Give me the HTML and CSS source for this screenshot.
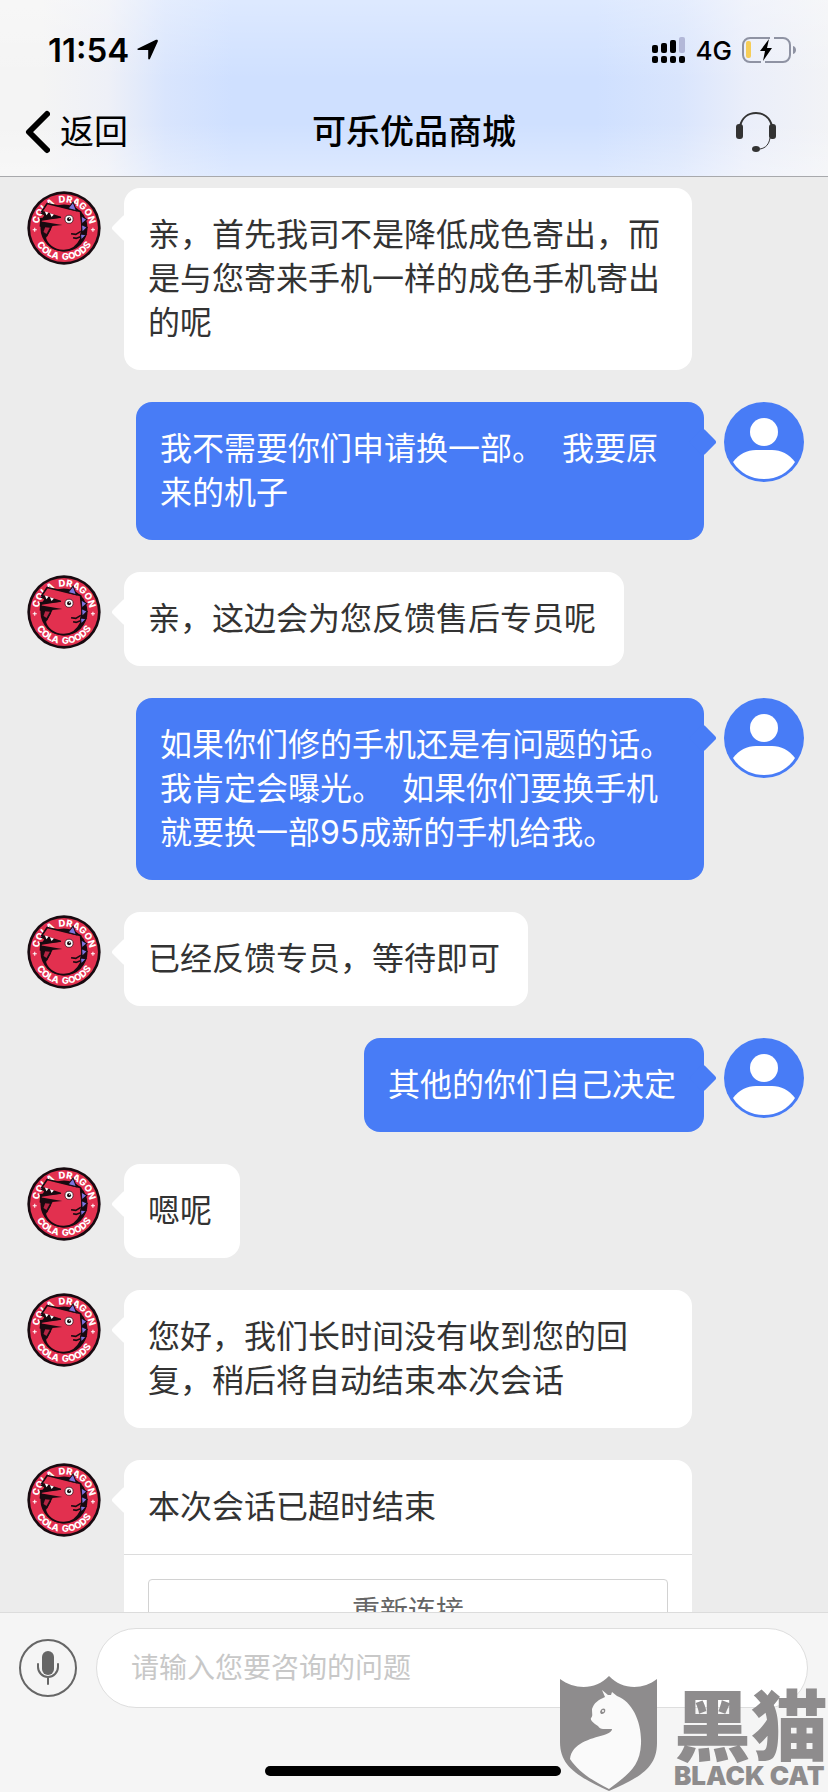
FILE: index.html
```html
<!DOCTYPE html>
<html lang="zh-CN">
<head>
  <meta charset="UTF-8" />
  <meta name="viewport" content="width=device-width, initial-scale=1.0"/>
  <title>可乐优品商城</title>
  <link rel="stylesheet" href="styles.css">
</head>
<body>
  <!-- shared avatars -->
  <svg class="sprite" aria-hidden="true">
    <symbol id="dragon" viewBox="0 0 220 220">
      <circle cx="110" cy="110" r="109" fill="#180a10"/>
      <circle cx="110" cy="110" r="101" fill="#e2304f"/>
      <circle cx="110" cy="110" r="70" fill="#180a10"/>
      <path id="arc-top" d="M34 124V110a76 76 0 0 1 152 0v14" fill="none"/>
      <path id="arc-bottom" d="M15 110a95 95 0 0 0 190 0" fill="none"/>
      <text class="logo-text"><textPath href="#arc-top" startOffset="50%">COLA &nbsp;DRAGON</textPath></text>
      <text class="logo-text"><textPath href="#arc-bottom" startOffset="50%">COLA &nbsp;GOODS</textPath></text>
      <path d="M17 115h12M23 109v12M190 115h12M196 109v12" stroke="#fff" stroke-width="3"/>
      <path d="M60 37l57 14 42 10 5 45-4 36c-11 23-31 36-53 35-27-1-48-17-53-38l15-26-29-9 2-21 57-5-55-17z" fill="#e2304f" stroke="#180a10" stroke-width="5" stroke-linejoin="round"/>
      <path d="M45 61l50 19-55 9-3-9 31-2-28-10z" fill="#180a10"/>
      <path d="M53 61l11 3-6 8zM68 66l12 4-7 7z" fill="#fff"/>
      <path d="M39 90l66 11-29 3-16 31-15-9 12-17-17-5z" fill="#180a10"/>
      <path d="M54 108l14 1-10 19-9-6z" fill="#b52543"/>
      <path d="M131 127l14 2 15-9M137 139l9 2 13-5" fill="none" stroke="#180a10" stroke-width="5"/>
      <g fill="#7b74dd" stroke="#180a10" stroke-width="3">
        <path d="M122 52l15-19 10 26zM161 74l17 11-15 13zM162 100l17 8-15 15zM159 128l17 2-15 16z"/>
      </g>
      <circle cx="125" cy="84" r="12" fill="#fff" stroke="#180a10" stroke-width="2"/>
      <circle cx="125" cy="84" r="6" fill="#180a10"/>
      <circle cx="127" cy="82" r="2" fill="#fff"/>
    </symbol>
    <symbol id="user" viewBox="0 0 80 80">
      <circle cx="40" cy="40" r="40" fill="#487cf6"/>
      <circle cx="40" cy="30" r="14" fill="#fff"/>
      <path d="M9 60c6-8 14-12 23-12h16c9 0 17 4 23 12-7 11-18 17-31 17S16 71 9 60z" fill="#fff"/>
    </symbol>
  </svg>

  <div class="app">
    <header class="header">
      <div class="status-bar">
        <div class="status-left">
          <span class="time">11:54</span>
          <svg width="22" height="22" viewBox="0 0 22 22"><path d="M1 9.500L19 .8c1.300-.5 2.200.4 1.800 1.600L13 19.800c-.5 1.200-1.700 1-1.800-.2V11H2C.4 10.900-.3 10.100 1 9.500z"/></svg>
        </div>
        <div class="status-right">
          <svg width="34" height="28" viewBox="0 0 34 28">
            <rect x="0" y="9" width="6" height="8" rx="2"/>
            <rect x="9" y="7" width="6" height="10" rx="2"/>
            <rect x="18" y="4" width="6" height="13" rx="2"/>
            <rect x="27" y="1" width="6" height="16" rx="2" fill="#b3b8d8"/>
            <rect x="0" y="20" width="6" height="7" rx="2"/>
            <rect x="9" y="20" width="6" height="7" rx="2"/>
            <rect x="18" y="20" width="6" height="7" rx="2"/>
            <rect x="27" y="20" width="6" height="7" rx="2"/>
          </svg>
          <span class="network">4G</span>
          <svg width="54" height="26" viewBox="0 0 54 26">
            <path d="M28 1H8a7 7 0 0 0-7 7v10a7 7 0 0 0 7 7h11M32 1h9a7 7 0 0 1 7 7v10a7 7 0 0 1-7 7H23" fill="none" stroke="#8f93a3" stroke-width="2"/>
            <rect x="4" y="4" width="5" height="17" rx="2" fill="#f6cd58"/>
            <path d="M27 2L18 14h5l-2 10 9-13h-5z"/>
            <path d="M51 9c4 1 4 7 0 8z" fill="#8f93a3"/>
          </svg>
        </div>
      </div>
      <nav class="nav">
        <a class="back" href="#">
          <svg width="26" height="44" viewBox="0 0 26 44"><path d="M23 4L5 22l18 18" fill="none" stroke="#000" stroke-width="6" stroke-linecap="round" stroke-linejoin="round"/></svg>
          <span>返回</span>
        </a>
        <h1>可乐优品商城</h1>
        <button class="icon-btn service" type="button" aria-label="客服">
          <svg width="40" height="40" viewBox="0 0 40 40">
            <path d="M4 14C6 6 12 1 20 1s14 5 16 13" fill="none" stroke="#333" stroke-width="2"/>
            <rect x="0" y="12" width="7" height="15" rx="3" fill="#333"/>
            <rect x="33" y="12" width="7" height="15" rx="3" fill="#333"/>
            <path d="M34 26c-1 6-4 10-10 11" fill="none" stroke="#333" stroke-width="1"/>
            <ellipse cx="20" cy="37" rx="4" ry="3" fill="#333"/>
          </svg>
        </button>
      </nav>
    </header>

    <main class="chat">
      <div class="message agent">
        <svg class="avatar"><use href="#dragon"/></svg>
        <div class="bubble"><p>亲，首先我司不是降低成色寄出，而是与您寄来手机一样的成色手机寄出的呢</p></div>
      </div>
      <div class="message me">
        <svg class="avatar"><use href="#user"/></svg>
        <div class="bubble"><p>我不需要你们申请换一部。&nbsp; 我要原来的机子</p></div>
      </div>
      <div class="message agent">
        <svg class="avatar"><use href="#dragon"/></svg>
        <div class="bubble"><p>亲，这边会为您反馈售后专员呢</p></div>
      </div>
      <div class="message me">
        <svg class="avatar"><use href="#user"/></svg>
        <div class="bubble"><p>如果你们修的手机还是有问题的话。我肯定会曝光。&nbsp; 如果你们要换手机就要换一部95成新的手机给我。</p></div>
      </div>
      <div class="message agent">
        <svg class="avatar"><use href="#dragon"/></svg>
        <div class="bubble"><p>已经反馈专员，等待即可</p></div>
      </div>
      <div class="message me">
        <svg class="avatar"><use href="#user"/></svg>
        <div class="bubble"><p>其他的你们自己决定</p></div>
      </div>
      <div class="message agent">
        <svg class="avatar"><use href="#dragon"/></svg>
        <div class="bubble"><p>嗯呢</p></div>
      </div>
      <div class="message agent">
        <svg class="avatar"><use href="#dragon"/></svg>
        <div class="bubble"><p>您好，我们长时间没有收到您的回复，稍后将自动结束本次会话</p></div>
      </div>
      <div class="message agent">
        <svg class="avatar"><use href="#dragon"/></svg>
        <div class="bubble wide">
          <p>本次会话已超时结束</p>
          <div class="actions"><button class="reconnect" type="button">重新连接</button></div>
        </div>
      </div>
    </main>

    <footer class="footer">
      <div class="input-row">
        <button class="icon-btn" type="button" aria-label="语音">
          <svg width="60" height="60" viewBox="0 0 60 60">
            <circle cx="30" cy="30" r="28" fill="none" stroke="#666" stroke-width="2"/>
            <rect x="24" y="13" width="12" height="24" rx="6" fill="#666"/>
            <path d="M20 26v3a10 10 0 0 0 20 0v-3M30 40v6" fill="none" stroke="#666" stroke-width="2" stroke-linecap="round"/>
          </svg>
        </button>
        <input class="text-input" type="text" aria-label="输入问题" placeholder="请输入您要咨询的问题">
      </div>
      <div class="home-indicator"></div>
    </footer>

    <div class="watermark">
      <svg width="98" height="116" viewBox="0 0 98 116">
        <path d="M0 3c15 11 36 11 49-3 13 14 34 14 48 3v64c0 26-19 35-48 48C19 101 0 91 0 66z" fill="#8e8c8d"/>
        <path d="M42 14l6 5h3l1-3 5 4c16 6 25 27 24 48-1 22-12 30-32 45-18-9-31-18-39-30 2-16 20-20 34-24 6-2 8-4 8-6H43c-2 0-4-1-5-3-5-3-8-6-7-8 2-2 1-4 1-9 2-6 6-9 13-12z" fill="#fafafa"/>
        <path d="M40 36c1-4 4-4 5-3 1 3-1 5-4 5z" fill="#8e8c8d"/>
        <circle cx="43" cy="35" r="1" fill="#fff"/>
      </svg>
      <div class="watermark-text">
        <span class="watermark-cn">黑猫</span>
        <span class="watermark-en">BLACK CAT</span>
      </div>
    </div>
  </div>
</body>
</html>
```

FILE: styles.css
```css
* {
  box-sizing: border-box;
}

body {
  margin: 0;
  font-family: Inter, "Noto Sans CJK SC", sans-serif;
  background: #ececec;
  color: #333;
  text-spacing-trim: space-all;
}

svg {
  display: block;
  flex: none;
}

button {
  font-family: inherit;
  padding: 0;
  background: none;
  border: none;
}

.sprite {
  position: absolute;
  width: 0;
  height: 0;
}

.logo-text {
  font: 800 28px Inter, sans-serif;
  fill: #fff;
  text-anchor: middle;
}

.app {
  position: relative;
  display: flex;
  flex-direction: column;
  height: 100vh;
  overflow: hidden;
}

/* header */
.header {
  flex: none;
  color: #000;
  border-bottom: 1px solid #a8a9ac;
  background:
    linear-gradient(to bottom, rgba(255, 255, 255, 0.3), rgba(255, 255, 255, 0) 45%, rgba(255, 255, 255, 0) 70%, rgba(255, 255, 255, 0.3)),
    linear-gradient(to right, #f4f4f4 5%, #eef0f7 13%, #d9e5fd 20%, #cfe0ff 28%, #cfe0ff 72%, #d9e5fd 82%, #eaeefa 90%, #f2f3f6);
}

.status-bar {
  display: flex;
  justify-content: space-between;
  align-items: center;
  height: 88px;
  padding: 12px 32px 0 48px;
}

.status-left,
.status-right {
  display: flex;
  align-items: center;
  gap: 8px;
}

.status-right {
  gap: 10px;
}

.time {
  font-size: 33px;
  font-weight: 600;
}

.network {
  font-size: 26px;
  font-weight: 500;
}

.nav {
  display: grid;
  grid-template-columns: 1fr auto 1fr;
  align-items: center;
  height: 88px;
  padding: 0 52px 0 24px;
}

.back {
  display: flex;
  align-items: center;
  gap: 10px;
  font-size: 34px;
  line-height: 40px;
  color: #000;
  text-decoration: none;
}

.nav h1 {
  margin: 0 -28px 0 0;
  font-size: 34px;
  font-weight: 500;
  line-height: 40px;
}

.service {
  justify-self: end;
}

/* messages */
.chat {
  flex: 1;
  min-height: 0;
  overflow: hidden;
  display: flex;
  flex-direction: column;
  gap: 32px;
  padding: 11px 24px 0;
}

.message {
  flex: none;
  display: flex;
  align-items: flex-start;
  gap: 20px;
}

.agent {
  padding-right: 112px;
}

.me {
  flex-direction: row-reverse;
  padding-left: 112px;
}

.avatar {
  width: 80px;
  height: 80px;
}

.agent .avatar {
  padding: 3px;
}

.bubble {
  position: relative;
  background: #fff;
  border-radius: 16px;
}

.bubble.wide {
  flex: 1;
}

.bubble::before {
  content: "";
  position: absolute;
  top: 30px;
  left: -9px;
  width: 20px;
  height: 20px;
  border-radius: 3px;
  background: #fff;
  transform: rotate(45deg);
}

.me .bubble {
  background: #487cf6;
  color: #fff;
}

.me .bubble::before {
  left: auto;
  right: -9px;
  background: #487cf6;
}

.bubble p {
  position: relative;
  margin: 0;
  padding: 25px 28px 25px 24px;
  font-size: 32px;
  line-height: 44px;
}

.actions {
  padding: 24px;
  border-top: 1px solid #dcdcdc;
}

.reconnect {
  width: 100%;
  height: 64px;
  padding-bottom: 4px;
  border: 1px solid #d2d2d2;
  border-radius: 4px;
  font-size: 28px;
  color: #666;
}

/* footer */
.footer {
  position: relative;
  flex: none;
  padding: 15px 20px 16px 18px;
  background: #f5f5f5;
  border-top: 1px solid #dcdcdc;
}

.input-row {
  display: flex;
  align-items: center;
  gap: 18px;
}

.text-input {
  flex: 1;
  min-width: 0;
  height: 80px;
  padding: 0 34px 4px;
  border: 1px solid #dedede;
  border-radius: 40px;
  background: #fff;
  font-family: "Noto Sans CJK SC", sans-serif;
  font-size: 28px;
  color: #333;
  outline: none;
}

.text-input::placeholder {
  color: #c8c8c8;
}

.home-indicator {
  width: 296px;
  height: 10px;
  margin: 58px auto 0;
  border-radius: 5px;
  background: #000;
}

/* watermark */
.watermark {
  position: absolute;
  right: 0;
  bottom: 0;
  display: flex;
  align-items: flex-end;
  gap: 16px;
  color: #8e8c8d;
}

.watermark-text {
  display: flex;
  flex-direction: column;
  padding-bottom: 2px;
}

.watermark-cn {
  font: 900 77px/80px "Noto Sans CJK SC", sans-serif;
}

.watermark-en {
  font: 900 26px/28px Inter, sans-serif;
}
```
